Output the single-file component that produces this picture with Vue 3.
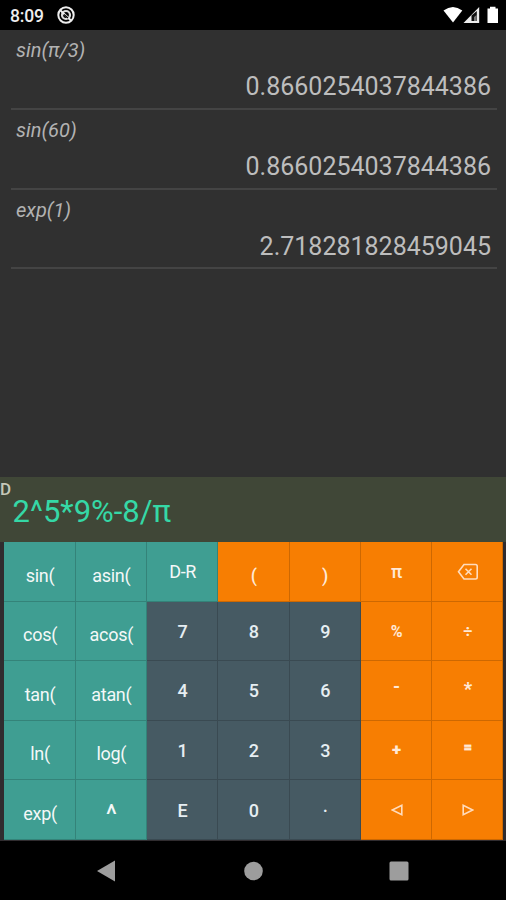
<template>
    <div class="phone">
        <header class="status-bar">
            <span class="clock">8:09</span>
            <svg class="notice" width="20" height="20" viewBox="0 0 20 20">
                <circle cx="10" cy="10" r="7.7" fill="none" stroke="#eee" stroke-width="2" />
                <circle cx="10" cy="10" r="4" fill="none" stroke="#ddd" stroke-width="2.2" />
                <path d="M4.500 5.500L15 15.500" stroke="#eee" stroke-width="2" />
                <path d="M8 9.500l4 3.500" stroke="#000" stroke-width="1.2" />
            </svg>
            <svg class="signals" width="56" height="20" viewBox="0 0 56 20">
                <path d="M0.500 5.600Q10 -1.600 19.300 5.600L10 17.400Z" fill="#fff" />
                <path d="M20.500 18L36.200 2V18Z" fill="#eee" />
                <path d="M28.500 16V10.500L33.800 6V16Z" fill="#111" />
                <path d="M31 16V12L33.600 10V16Z" fill="#777" />
                <path d="M44.500 3.500H47V1.800H52.500V3.500H55V18H44.500Z" fill="#fff" />
            </svg>
        </header>

        <main class="history">
            <div v-for="item in history" :key="item.expression" class="entry">
                <div class="expression">{{ item.expression }}</div>
                <div class="result">{{ item.result }}</div>
            </div>
        </main>

        <section class="display">
            <span class="mode">{{ angleMode }}</span>
            <span class="input">{{ input }}</span>
        </section>

        <section class="keypad">
            <button v-for="key in keys" :key="key.label" class="key" :class="[key.type, key.shape]" @click="press(key.label)">
                <svg v-if="key.label === 'del'" width="22" height="18" viewBox="0 0 22 18">
                    <path d="M7 1.500H18.500Q20.200 1.500 20.200 3.200V14.300Q20.200 16 18.500 16H7L1.500 8.750Z" />
                    <path d="M8.500 5.700L14.500 11.700M14.500 5.700L8.500 11.700" />
                </svg>
                <svg v-else-if="key.label === 'left'" width="12" height="12" viewBox="0 0 12 12">
                    <path d="M10.800 1.300V10.700L1.300 6Z" />
                </svg>
                <svg v-else-if="key.label === 'right'" width="12" height="12" viewBox="0 0 12 12">
                    <path d="M1.200 1.300V10.700L10.700 6Z" />
                </svg>
                <span v-else>{{ key.label }}</span>
            </button>
        </section>

        <nav class="nav-bar">
            <svg width="20" height="22" viewBox="0 0 20 22"><path d="M19 0.500V21.500L1 11Z" /></svg>
            <svg width="20" height="22" viewBox="0 0 20 22"><circle cx="10.500" cy="11" r="9.300" /></svg>
            <svg width="20" height="22" viewBox="0 0 20 22"><rect x="0.500" y="1.500" width="19" height="19" rx="1.500" /></svg>
        </nav>
    </div>
</template>

<script setup>
import { ref } from 'vue';

const history = [
    { expression: 'sin(π/3)', result: '0.8660254037844386' },
    { expression: 'sin(60)', result: '0.8660254037844386' },
    { expression: 'exp(1)', result: '2.718281828459045' },
];

const keys = [
    { label: 'sin(', type: 'func', shape: 'low' },
    { label: 'asin(', type: 'func', shape: 'low' },
    { label: 'D-R', type: 'func' },
    { label: '(', type: 'op', shape: 'low' },
    { label: ')', type: 'op', shape: 'low' },
    { label: 'π', type: 'op' },
    { label: 'del', type: 'op' },
    { label: 'cos(', type: 'func', shape: 'low' },
    { label: 'acos(', type: 'func', shape: 'low' },
    { label: '7', type: 'num' },
    { label: '8', type: 'num' },
    { label: '9', type: 'num' },
    { label: '%', type: 'op', shape: 'small' },
    { label: '÷', type: 'op', shape: 'small' },
    { label: 'tan(', type: 'func', shape: 'low' },
    { label: 'atan(', type: 'func', shape: 'low' },
    { label: '4', type: 'num' },
    { label: '5', type: 'num' },
    { label: '6', type: 'num' },
    { label: '-', type: 'op', shape: 'minus' },
    { label: '*', type: 'op', shape: 'star' },
    { label: 'ln(', type: 'func', shape: 'low' },
    { label: 'log(', type: 'func', shape: 'low' },
    { label: '1', type: 'num' },
    { label: '2', type: 'num' },
    { label: '3', type: 'num' },
    { label: '+', type: 'op', shape: 'plus' },
    { label: '=', type: 'op', shape: 'equals' },
    { label: 'exp(', type: 'func', shape: 'low' },
    { label: '^', type: 'func', shape: 'caret' },
    { label: 'E', type: 'num' },
    { label: '0', type: 'num' },
    { label: '·', type: 'num', shape: 'dot' },
    { label: 'left', type: 'op' },
    { label: 'right', type: 'op' },
];

const input = ref('2^5*9%-8/π');
const angleMode = ref('D');

const press = (label) => {
    if (label === 'D-R') {
        angleMode.value = angleMode.value === 'D' ? 'R' : 'D';
    } else if (label === 'del') {
        input.value = input.value.slice(0, -1);
    } else if (!['left', 'right', '='].includes(label)) {
        input.value += label === '·' ? '.' : label;
    }
};
</script>

<style>
body {
    margin: 0;
    background: #000;
}
</style>

<style scoped>
.phone {
    display: flex;
    flex-direction: column;
    height: 900px;
    overflow: hidden;
    background: #303030;
    font-family: Roboto, sans-serif;
}

.status-bar {
    display: flex;
    align-items: center;
    box-sizing: border-box;
    height: 30px;
    padding: 0 7px 0 10px;
    background: #000;
    color: #eee;
}

.clock {
    width: 46px;
    padding-top: 2px;
    font-size: 17.5px;
    font-weight: 500;
    letter-spacing: -0.2px;
}

.signals {
    margin-left: auto;
}

.history {
    flex: 1;
    padding: 0 9px 0 11px;
}

.entry {
    box-sizing: border-box;
    height: 79.8px;
    padding: 8px 6px 0 5px;
    border-bottom: 2px solid #444;
}

.expression {
    height: 25px;
    color: #b2b2b2;
    font-size: 20px;
    font-style: italic;
    line-height: 24px;
}

.result {
    margin-top: 9px;
    color: #bdbdbd;
    font-size: 25px;
    line-height: 30px;
    text-align: right;
}

.display {
    display: flex;
    box-sizing: border-box;
    height: 65px;
    background: #404737;
}

.mode {
    width: 12.5px;
    padding-top: 3px;
    color: #c5c9b8;
    font-size: 17px;
    font-weight: 500;
    line-height: 18px;
}

.input {
    padding-top: 15px;
    color: #35d8a6;
    font-size: 31px;
    line-height: 40px;
}

.keypad {
    display: grid;
    grid-template-columns: repeat(7, 1fr);
    grid-template-rows: repeat(5, 1fr);
    box-sizing: border-box;
    height: 299px;
    padding: 0 2.500px 1px 4.400px;
    background: #302c2f;
}

.key {
    display: flex;
    align-items: center;
    justify-content: center;
    padding: 1px 0 0 1px;
    border: 0 solid rgba(0, 0, 0, 0.17);
    border-width: 0 1px 1px 0;
    color: #f4f8f8;
    font-family: inherit;
    font-size: 18px;
    font-weight: 400;
    line-height: 22px;
}

.key svg {
    fill: none;
    stroke: #ffdcbd;
    stroke-width: 1.6;
}

.func {
    background: #3f9e92;
    letter-spacing: -0.3px;
}

.num {
    padding-top: 2px;
    background: #465a63;
    color: #e6eef2;
    font-weight: 500;
}

.op {
    background: #f77e02;
    color: #ffe9d6;
    font-weight: 500;
}

.low {
    padding-top: 8.500px;
}

.small {
    padding-top: 3px;
    font-size: 16px;
    font-weight: 700;
}

.minus {
    padding-bottom: 8px;
    font-weight: 700;
}

.star {
    padding-bottom: 4px;
    font-weight: 900;
}

.plus {
    padding-bottom: 3px;
    font-size: 17px;
    font-weight: 900;
}

.equals {
    padding-bottom: 5px;
    font-size: 16px;
    font-weight: 700;
    text-shadow: 0 1px 0 rgba(255, 220, 190, 0.5), 0 -1px 0 rgba(255, 220, 190, 0.5);
}

.caret {
    padding-top: 11px;
    font-size: 27px;
}

.nav-bar {
    display: flex;
    align-items: center;
    justify-content: space-between;
    box-sizing: border-box;
    height: 59px;
    padding: 0 97px 0 96px;
    background: #000;
}

.nav-bar svg {
    fill: #9d9d9d;
}
</style>
